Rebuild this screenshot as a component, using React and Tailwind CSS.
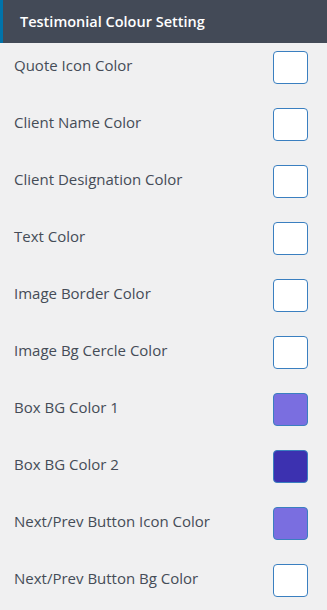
const rows = [
  { label: 'Quote Icon Color', color: '#ffffff' },
  { label: 'Client Name Color', color: '#ffffff' },
  { label: 'Client Designation Color', color: '#ffffff' },
  { label: 'Text Color', color: '#ffffff' },
  { label: 'Image Border Color', color: '#ffffff' },
  { label: 'Image Bg Cercle Color', color: '#ffffff' },
  { label: 'Box BG Color 1', color: '#7a6ee0' },
  { label: 'Box BG Color 2', color: '#3c31b0' },
  { label: 'Next/Prev Button Icon Color', color: '#7a6ee0' },
  { label: 'Next/Prev Button Bg Color', color: '#ffffff' },
]

export default function App() {
  return (
    <div className="w-[327px] h-[610px] bg-[#f0f0f1] font-['Open_Sans',sans-serif] overflow-hidden">
      <div className="h-[43px] bg-[#434a57] border-l-[3px] border-[#0073aa] flex items-center pl-[17px]">
        <span className="text-white text-[14.5px] font-semibold">Testimonial Colour Setting</span>
      </div>
      <div className="pt-[8px]">
        {rows.map((row) => (
          <div key={row.label} className="h-[57px] flex items-start justify-between pl-[14px] pr-[19px]">
            <div className="h-[33px] pb-[5px] flex items-center text-[15px] font-medium text-[#454c57]">{row.label}</div>
            <div
              className="w-[35px] h-[33px] rounded-[4px] border border-[#3a7fc0]"
              style={{ backgroundColor: row.color }}
            />
          </div>
        ))}
      </div>
    </div>
  )
}
